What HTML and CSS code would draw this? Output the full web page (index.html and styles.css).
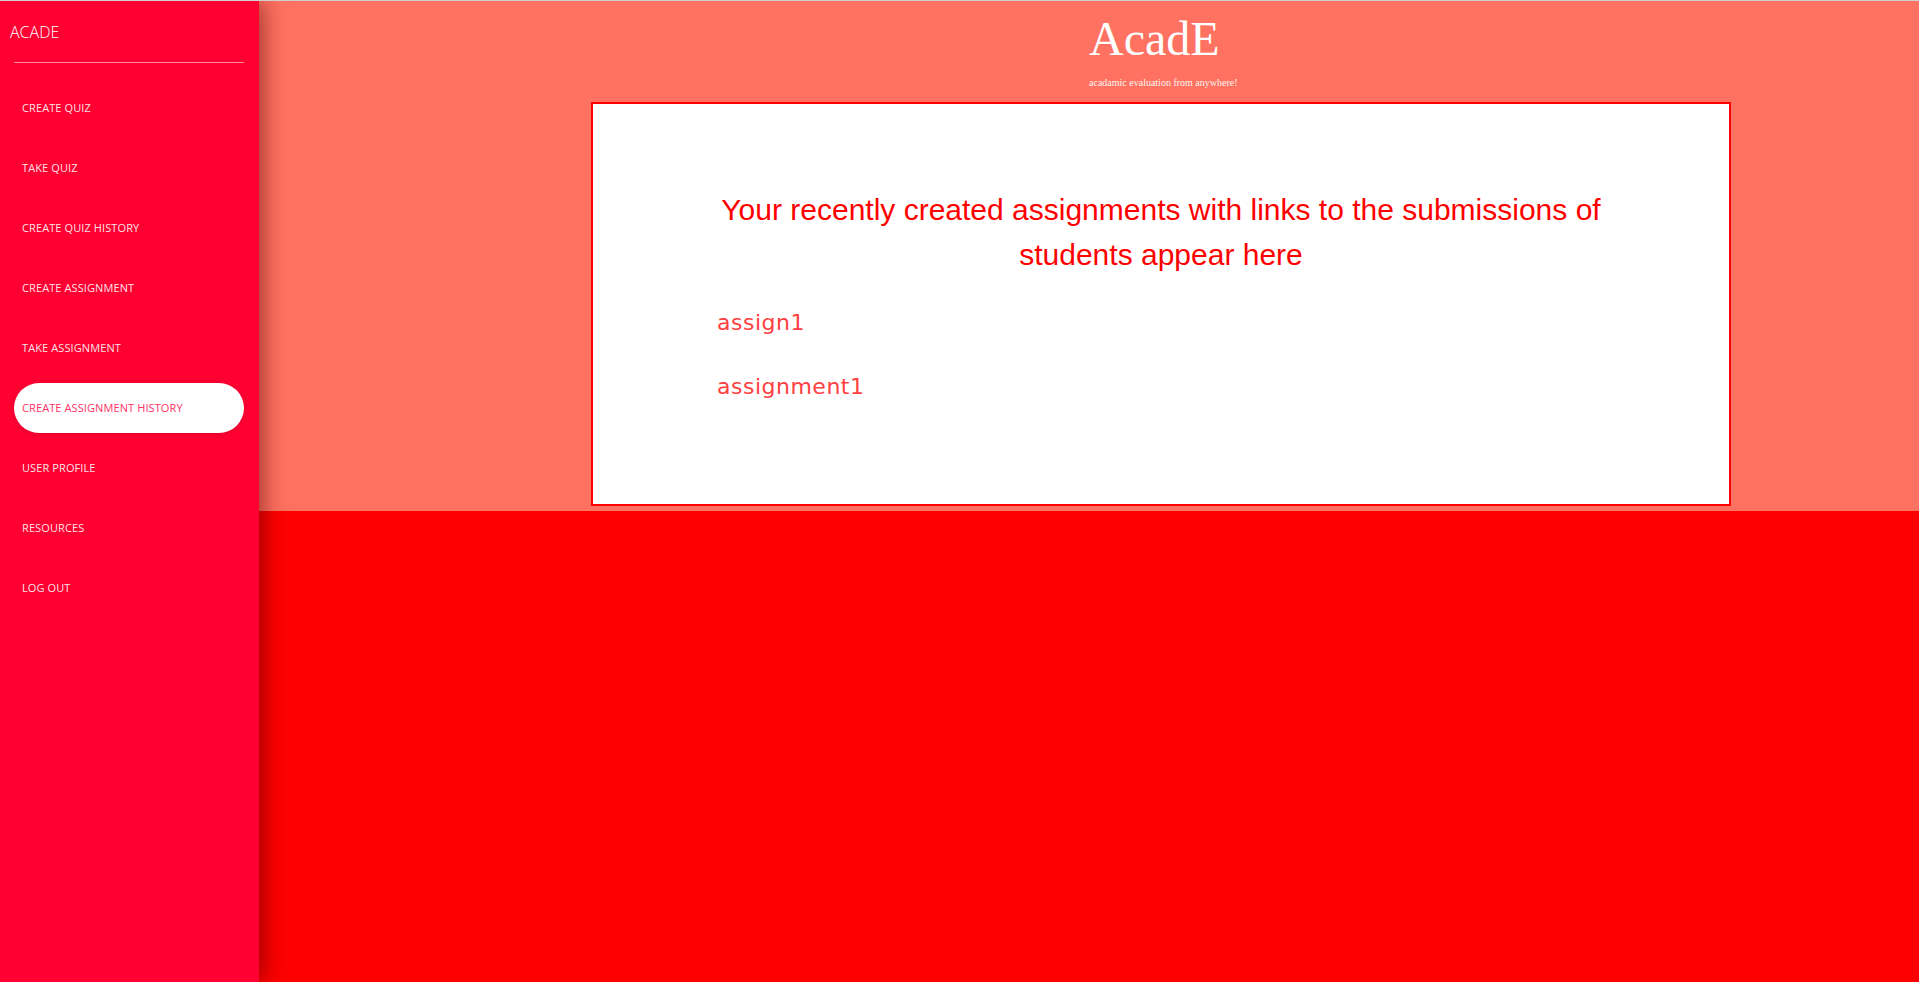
FILE: index.html
```html
<!DOCTYPE html>
<html lang="en">
<head>
<meta charset="utf-8">
<title>AcadE</title>
<link rel="stylesheet" href="styles.css">
</head>
<body>
<div class="page">
  <aside class="sidebar">
    <div class="brand">ACADE</div>
    <hr class="divider">
    <nav class="menu">
      <a class="menu-item" href="#">CREATE QUIZ</a>
      <a class="menu-item" href="#">TAKE QUIZ</a>
      <a class="menu-item" href="#">CREATE QUIZ HISTORY</a>
      <a class="menu-item" href="#">CREATE ASSIGNMENT</a>
      <a class="menu-item" href="#">TAKE ASSIGNMENT</a>
      <a class="menu-item active" href="#">CREATE ASSIGNMENT HISTORY</a>
      <a class="menu-item" href="#">USER PROFILE</a>
      <a class="menu-item" href="#">RESOURCES</a>
      <a class="menu-item" href="#">LOG OUT</a>
    </nav>
  </aside>
  <main class="main">
    <section class="hero">
      <div class="title-block">
        <h1 class="title">AcadE</h1>
        <p class="tagline">acadamic evaluation from anywhere!</p>
      </div>
      <div class="card">
        <h2 class="card-heading">Your recently created assignments with links to the submissions of students appear here</h2>
        <ul class="assign-list">
          <li><a class="assign-link" href="#">assign1</a></li>
          <li><a class="assign-link" href="#">assignment1</a></li>
        </ul>
      </div>
    </section>
    <section class="lower"></section>
  </main>
</div>
</body>
</html>
```

FILE: styles.css
```css
* { box-sizing: border-box; }
html, body { margin: 0; padding: 0; height: 100%; }
body {
  border-top: 1px solid #cfcfcf;
  font-family: "Open Sans", "Liberation Sans", sans-serif;
  overflow: hidden;
}
.page {
  display: flex;
  height: 100%;
}
.sidebar {
  width: 259px;
  flex-shrink: 0;
  background: #ff0033;
  position: relative;
  z-index: 2;
  box-shadow: 4px 0 22px rgba(80, 0, 0, 0.55);
  padding: 0 15px 0 14px;
}
.brand {
  color: #fff;
  font-size: 16px;
  font-weight: 300;
  line-height: 22px;
  padding-top: 20px;
  margin-left: -4px;
}
.divider {
  border: 0;
  border-top: 1px solid rgba(255, 255, 255, 0.55);
  margin: 19px 0 0 0;
  height: 0;
}
.menu {
  display: flex;
  flex-direction: column;
  gap: 10px;
  margin-top: 20px;
}
.menu-item {
  display: flex;
  align-items: center;
  height: 50px;
  padding-left: 8px;
  padding-bottom: 2px;
  border-radius: 25px;
  color: rgba(255, 255, 255, 0.9);
  font-size: 11px;
  text-decoration: none;
  letter-spacing: 0.1px;
}
.menu-item.active {
  background: #fff;
  color: #ff3366;
  box-shadow: 0 1px 4px rgba(120, 0, 20, 0.25);
}
.main {
  flex: 1;
  display: flex;
  flex-direction: column;
}
.hero {
  background: #ff7261;
  height: 510px;
  padding-top: 14px;
}
.title-block {
  padding-left: 50%;
}
.title {
  margin: 0;
  font-family: "Liberation Serif", "DejaVu Serif", serif;
  font-weight: 400;
  font-size: 48px;
  line-height: 48px;
  color: #fff;
}
.tagline {
  margin: 14px 0 0 0;
  font-family: "Liberation Serif", serif;
  font-size: 10px;
  line-height: 12px;
  color: #fff3ef;
}
.card {
  margin: 13px 0 0 20%;
  width: 1140px;
  height: 404px;
  background: #fff;
  border: 2px solid #ff0000;
  padding: 83px 124px 0 124px;
}
.card-heading {
  margin: 0;
  font-family: "Liberation Sans", Arial, sans-serif;
  font-weight: 400;
  font-size: 30px;
  line-height: 45px;
  text-align: center;
  color: #ff0000;
}
.assign-list {
  list-style: none;
  margin: 29px 0 0 0;
  padding: 0;
  display: flex;
  flex-direction: column;
  gap: 30px;
}
.assign-link {
  font-family: "DejaVu Sans", "Open Sans", sans-serif;
  font-size: 22px;
  line-height: 34px;
  letter-spacing: 0.5px;
  color: #ff4040;
  text-decoration: none;
}
.lower {
  flex: 1;
  background: #ff0000;
}
```
